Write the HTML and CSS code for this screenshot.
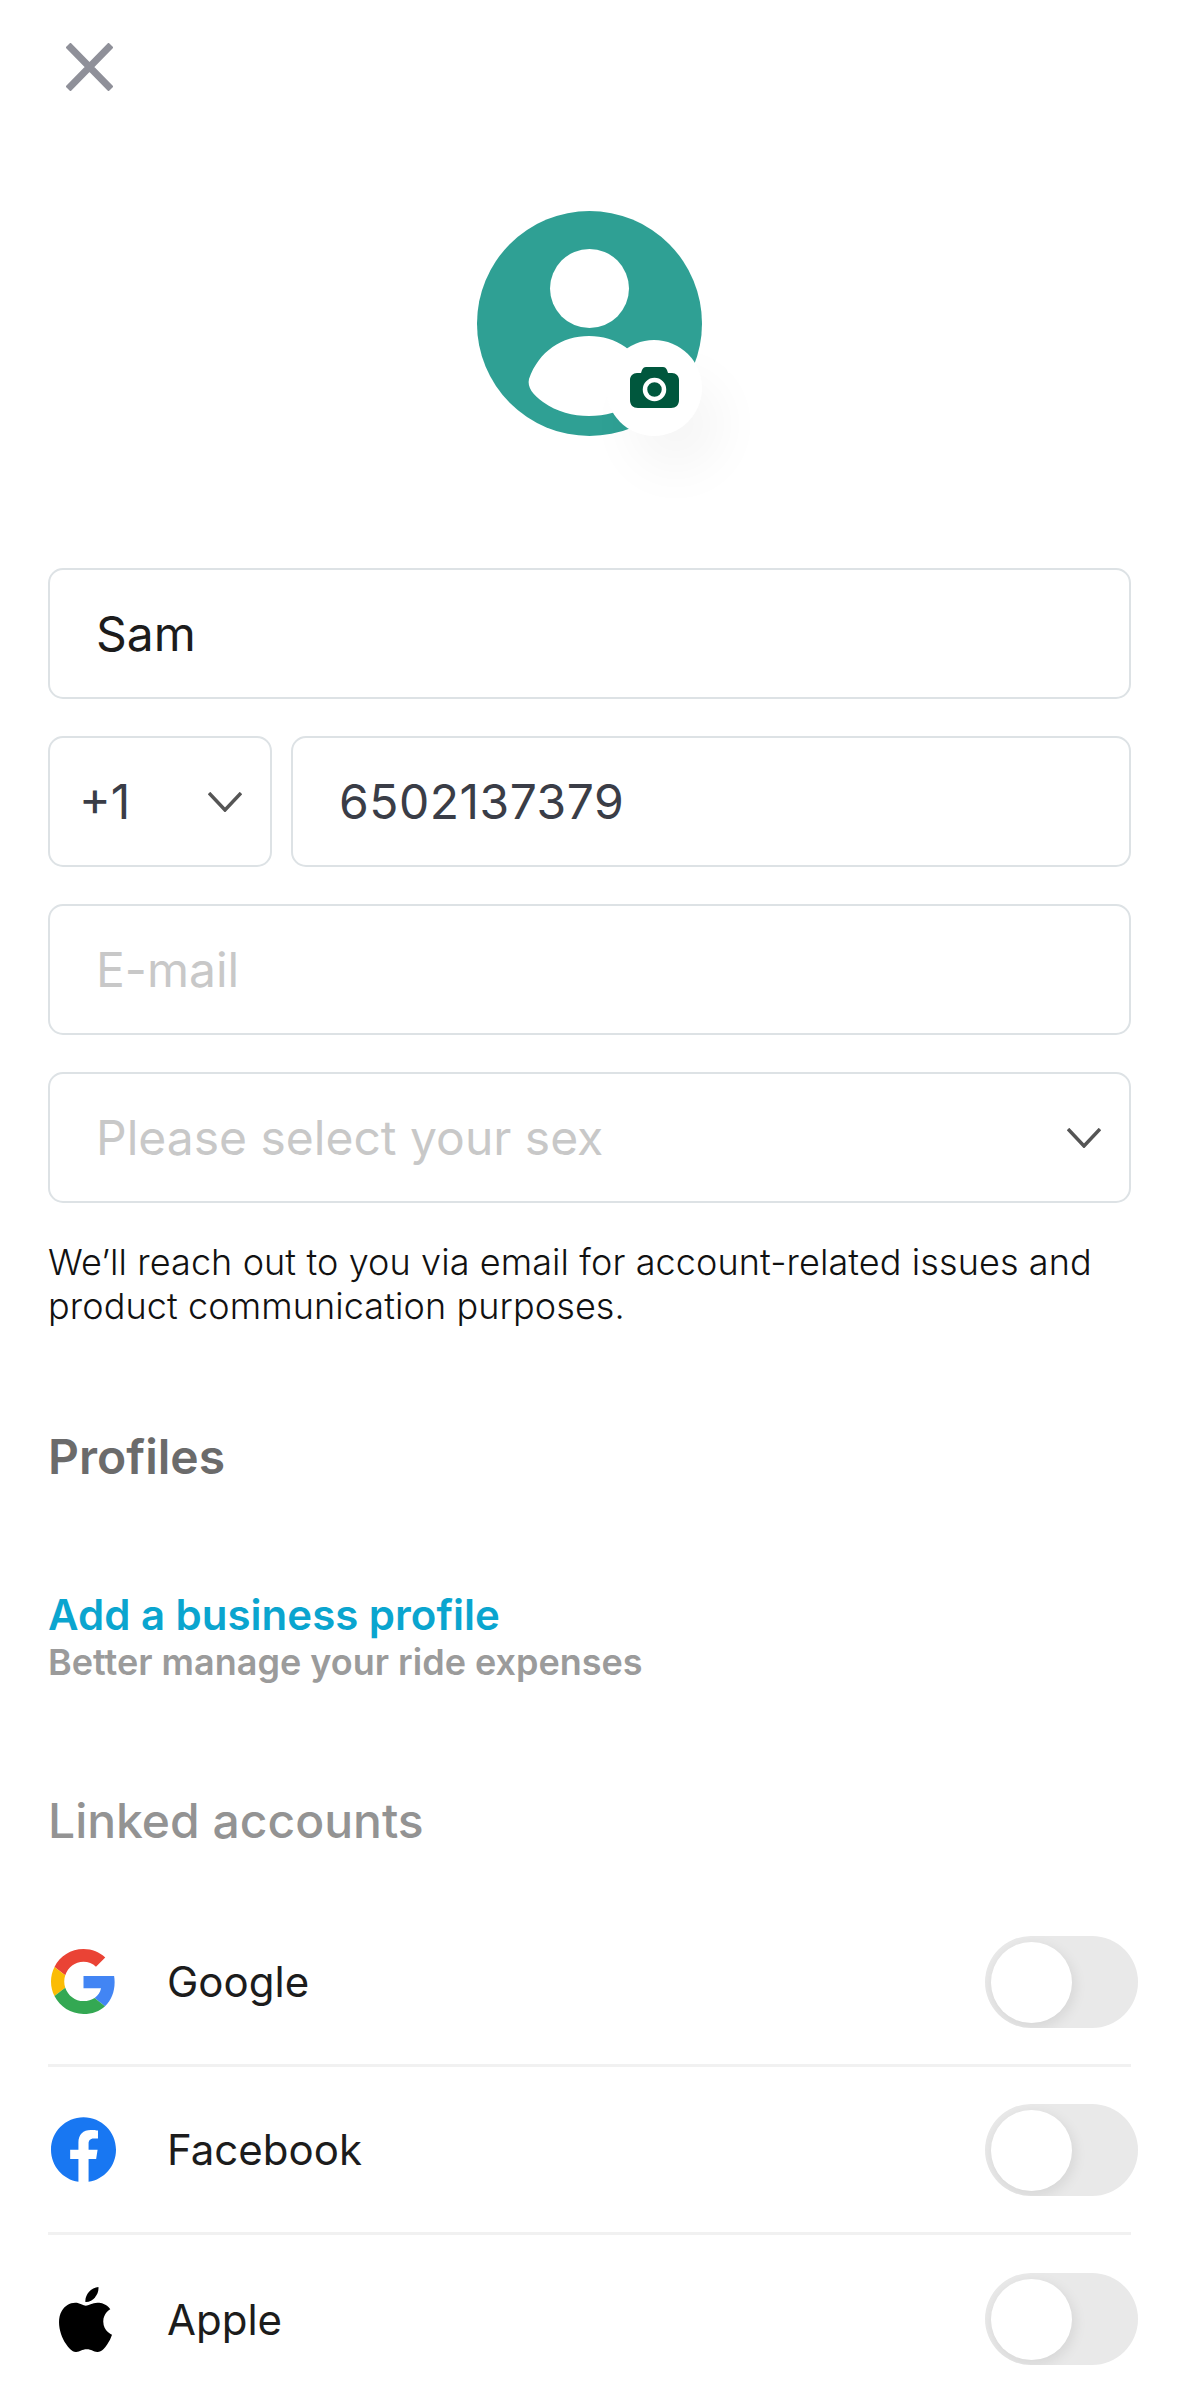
FILE: index.html
```html
<!DOCTYPE html>
<html lang="en">
<head>
  <meta charset="UTF-8" />
  <meta name="viewport" content="width=device-width, initial-scale=1.0"/>
  <title>Edit profile</title>
  <link rel="stylesheet" href="styles.css">
</head>
<body>
  <div class="page">
    <div class="close">
      <svg width="47" height="48" viewBox="0 0 47 48"><path d="M2 2L45 46M45 2L2 46" stroke="#8f9099" stroke-width="7" fill="none"/></svg>
    </div>

    <div class="avatar">
      <svg width="225" height="225" viewBox="0 0 225 225">
        <circle cx="112.5" cy="112.5" r="112.5" fill="#2fa094"/>
        <circle cx="112.5" cy="77.5" r="39.5" fill="#fff"/>
        <path d="M112 125C85 125 62 140 52 168C50 176 56 184 66 191C80 201 96 205 112 205C128 205 144 201 158 191C168 184 174 176 172 168C162 140 139 125 112 125Z" fill="#fff"/>
      </svg>
      <div class="badge">
        <svg width="49" height="41" viewBox="0 0 49 41">
          <path d="M16 0H33C35 0 36 1 37 3L38 6H42C46 6 49 9 49 13V33C49 38 46 41 41 41H8C3 41 0 38 0 33V13C0 9 3 6 7 6H11L12 3C13 1 14 0 16 0Z" fill="#00573d"/>
          <circle cx="24.5" cy="22.5" r="9.5" fill="none" stroke="#fff" stroke-width="4.5"/>
        </svg>
      </div>
    </div>

    <div class="field name">Sam</div>
    <div class="phone-row">
      <div class="field code">
        <span>+1</span>
        <svg class="chev" width="34" height="20" viewBox="0 0 34 20"><path d="M1 1L17 18L33 1" stroke="#555" stroke-width="3.5" fill="none"/></svg>
      </div>
      <div class="field number">6502137379</div>
    </div>
    <div class="field empty">E-mail</div>
    <div class="field empty sex">
      <span>Please select your sex</span>
      <svg class="chev" width="34" height="20" viewBox="0 0 34 20"><path d="M1 1L17 18L33 1" stroke="#555" stroke-width="3.5" fill="none"/></svg>
    </div>

    <p class="note">We’ll reach out to you via email for account-related issues and product communication purposes.</p>

    <h2 class="profiles">Profiles</h2>
    <div class="biz-title">Add a business profile</div>
    <div class="biz-sub">Better manage your ride expenses</div>

    <h3 class="linked">Linked accounts</h3>

    <div class="row">
      <svg class="logo" width="65" height="65" viewBox="0 0 48 48">
        <path fill="#EA4335" d="M24 9.5c3.54 0 6.71 1.22 9.21 3.6l6.85-6.85C35.9 2.38 30.47 0 24 0 14.62 0 6.51 5.38 2.56 13.22l7.98 6.19C12.43 13.72 17.74 9.5 24 9.5z"/>
        <path fill="#4285F4" d="M46.98 24.55c0-1.57-.15-3.09-.38-4.55H24v9.02h12.94c-.58 2.96-2.26 5.48-4.78 7.18l7.73 6c4.51-4.18 7.09-10.36 7.09-17.65z"/>
        <path fill="#FBBC05" d="M10.53 28.59c-.48-1.45-.76-2.99-.76-4.59s.27-3.14.76-4.59l-7.98-6.19C.92 16.46 0 20.12 0 24c0 3.88.92 7.54 2.56 10.78l7.97-6.19z"/>
        <path fill="#34A853" d="M24 48c6.48 0 11.93-2.13 15.89-5.81l-7.73-6c-2.15 1.45-4.92 2.3-8.16 2.3-6.26 0-11.57-4.22-13.47-9.91l-7.98 6.19C6.51 42.62 14.62 48 24 48z"/>
      </svg>
      <span class="label">Google</span>
      <div class="toggle"><div class="knob"></div></div>
    </div>
    <div class="row">
      <svg class="logo" width="65" height="65" viewBox="0 0 24 24">
        <path fill="#1877F2" d="M24 12.073c0-6.627-5.373-12-12-12s-12 5.373-12 12c0 5.99 4.388 10.954 10.125 11.854v-8.385H7.078v-3.47h3.047V9.43c0-3.007 1.792-4.669 4.533-4.669 1.312 0 2.686.235 2.686.235v2.953H15.83c-1.491 0-1.956.925-1.956 1.874v2.25h3.328l-.532 3.47h-2.796v8.385C19.612 23.027 24 18.062 24 12.073z"/>
      </svg>
      <span class="label">Facebook</span>
      <div class="toggle"><div class="knob"></div></div>
    </div>
    <div class="row last">
      <svg class="logo apple" width="65" height="65" viewBox="0 0 24 24">
        <path fill="#000" d="M12.152 6.896c-.948 0-2.415-1.078-3.96-1.04-2.04.027-3.91 1.183-4.961 3.014-2.117 3.675-.546 9.103 1.519 12.09 1.013 1.454 2.208 3.09 3.792 3.039 1.52-.065 2.09-.987 3.935-.987 1.831 0 2.35.987 3.96.948 1.637-.026 2.676-1.48 3.676-2.948 1.156-1.688 1.636-3.325 1.662-3.415-.039-.013-3.182-1.221-3.22-4.857-.026-3.04 2.48-4.494 2.597-4.559-1.429-2.09-3.623-2.324-4.39-2.376-2-.156-3.675 1.09-4.61 1.09zM15.53 3.83c.843-1.012 1.4-2.427 1.245-3.83-1.207.052-2.662.805-3.532 1.818-.78.896-1.454 2.338-1.273 3.714 1.338.104 2.715-.688 3.559-1.701"/>
      </svg>
      <span class="label">Apple</span>
      <div class="toggle"><div class="knob"></div></div>
    </div>
  </div>
</body>
</html>
```
FILE: styles.css
```css
html, body {
  margin: 0;
  background: #fff;
}
.page {
  height: 2396px;
  overflow: hidden;
  box-sizing: border-box;
  padding: 43px 48px 0 48px;
  font-family: Inter, "Liberation Sans", sans-serif;
  color: #1c1c1c;
}
.close {
  height: 48px;
  margin-left: 18px;
}
.close svg {
  display: block;
}
.avatar {
  position: relative;
  width: 225px;
  height: 225px;
  margin: 120px auto 0;
}
.avatar > svg {
  display: block;
}
.badge {
  position: absolute;
  right: 0;
  bottom: 0;
  width: 96px;
  height: 96px;
  border-radius: 50%;
  background: #fff;
  display: flex;
  align-items: center;
  justify-content: center;
  box-shadow: 22px 36px 50px rgba(0, 0, 0, 0.04);
}
.badge svg {
  margin-bottom: 2px;
}
.field {
  height: 131px;
  box-sizing: border-box;
  border: 2px solid #dde2e5;
  border-radius: 15px;
  display: flex;
  align-items: center;
  justify-content: space-between;
  padding: 0 46px;
  font-size: 48px;
  margin-bottom: 37px;
}
.name {
  margin-top: 132px;
  color: #1c1c1c;
}
.phone-row {
  display: flex;
  gap: 19px;
}
.code {
  width: 224px;
  flex: none;
  padding: 0 28px 0 29px;
  color: #3a3d47;
}
.number {
  flex: 1;
  padding-left: 46px;
  color: #3a3d47;
  letter-spacing: 0.5px;
}
.empty {
  color: #c8c8c8;
}
.sex {
  padding-right: 28px;
  margin-bottom: 0;
}
.note {
  margin: 37px 0 0;
  font-size: 36px;
  line-height: 44px;
  font-weight: 300;
  color: #111;
  letter-spacing: 0.1px;
}
.profiles {
  margin: 101px 0 0;
  font-size: 48px;
  line-height: 56px;
  font-weight: 600;
  color: #6b6b6b;
}
.biz-title {
  margin-top: 103px;
  font-size: 42px;
  line-height: 54px;
  font-weight: 600;
  color: #0aa5cf;
}
.biz-sub {
  font-size: 36px;
  line-height: 40px;
  font-weight: 600;
  color: #9b9b9b;
}
.linked {
  margin: 111px 0 0;
  font-size: 48px;
  line-height: 56px;
  font-weight: 500;
  color: #939393;
}
.row {
  height: 168px;
  box-sizing: border-box;
  border-bottom: 3px solid #f1f1f1;
  display: flex;
  align-items: center;
}
.row.last {
  border-bottom: 0;
}
.linked + .row {
  margin-top: 50px;
}
.logo {
  flex: none;
  margin-left: 3px;
}
.logo.apple {
  margin-left: 5px;
  margin-right: -2px;
}
.label {
  margin-left: 51px;
  font-size: 42px;
  color: #1c1c1c;
}
.toggle {
  margin-left: auto;
  margin-right: -7px;
  width: 153px;
  height: 92px;
  box-sizing: border-box;
  padding: 6px;
  border-radius: 46px;
  background: #e9e9e9;
  overflow: hidden;
}
.knob {
  width: 81px;
  height: 81px;
  border-radius: 50%;
  background: #fff;
  box-shadow: 2px 4px 14px rgba(0, 0, 0, 0.09);
}
```
